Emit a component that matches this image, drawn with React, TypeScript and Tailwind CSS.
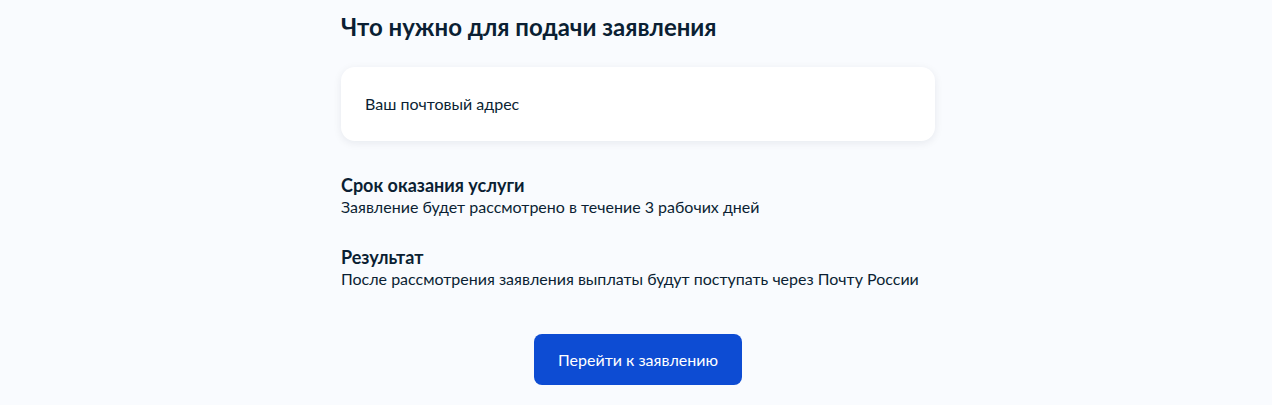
export default function App() {
  return (
    <div className="min-h-[405px] w-full bg-[#f9fbfe] pl-[4px] text-[#0b1f33]" style={{ fontFamily: "Lato, 'Noto Sans', sans-serif" }}>
      <div className="mx-auto flex w-[594px] flex-col pt-[11px]">
        <h2 className="text-[24px] font-bold leading-[32px]">Что нужно для подачи заявления</h2>
        <div className="mt-[24px] flex h-[74px] items-center rounded-[14px] bg-white px-[24px] shadow-[0_2px_8px_rgba(11,31,51,0.08)]">
          <span className="text-[16px] leading-[24px]">Ваш почтовый адрес</span>
        </div>
        <div className="mt-[33px]">
          <div className="text-[18px] font-bold leading-[22px]">Срок оказания услуги</div>
          <div className="text-[16px] leading-[22px]">Заявление будет рассмотрено в течение 3 рабочих дней</div>
        </div>
        <div className="mt-[28px]">
          <div className="text-[18px] font-bold leading-[22px]">Результат</div>
          <div className="text-[16px] leading-[22px]">После рассмотрения заявления выплаты будут поступать через Почту России</div>
        </div>
        <div className="mt-[44px] flex justify-center">
          <button className="h-[51px] w-[208px] rounded-[8px] bg-[#0d4cd3] text-[16px] leading-[24px] text-white">Перейти к заявлению</button>
        </div>
      </div>
    </div>
  );
}
